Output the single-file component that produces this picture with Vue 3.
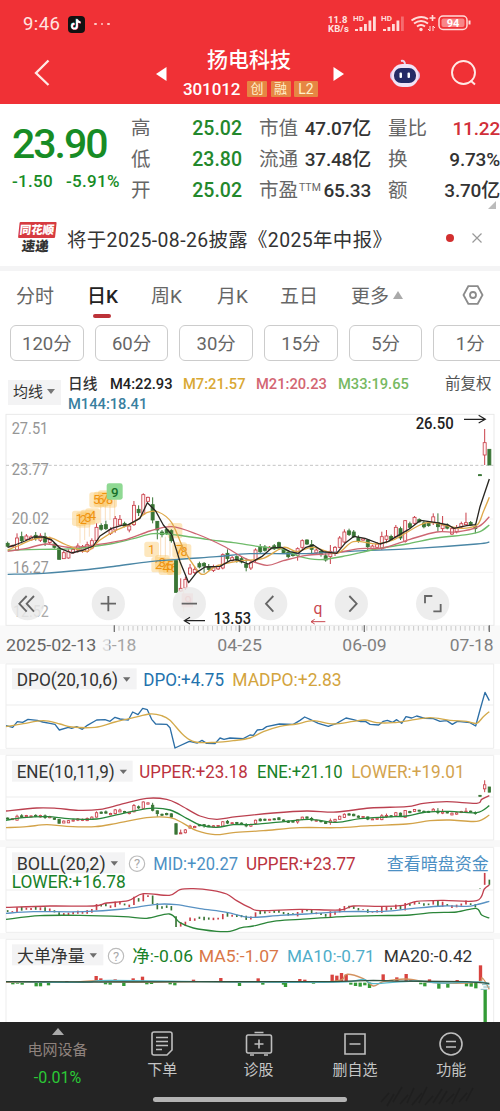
<script setup>
import { h } from 'vue'

const stats = [
  ['高', '25.02', '市值', '', '47.07亿', '量比', '11.22'],
  ['低', '23.80', '流通', '', '37.48亿', '换', '9.73%'],
  ['开', '25.02', '市盈', 'TTM', '65.33', '额', '3.70亿'],
]
const periods = ['120分', '60分', '30分', '15分', '5分', '1分']

// Chart canvases use three units per pixel.
const step = 14.03
const cx = (i) => 23 + i * step

// [colour, high, low, body top, body bottom], one entry per trading day
const days = `g395,412 r404,412 r370,422,384,420 g365,400,380,392 r372,392 r376,393 g366,392,376,386 r370,396 g368,408,380,396 r380,402 g396,416 g414,448,414,448
r422,446,428,446 r418,446,424,444 r413,432 r400,428,408,420 r405,428 r395,428,404,424 r385,418,392,414 r340,396,352,392 g340,362 g332,360,344,356 r352,375 r318,368,326,360 r315,345,328,345 g335,352
r345,367,348,360 r273,348,286,344 g286,318,298,308 r250,315,254,312 r260,275,262,274 g262,340,284,330 g333,388,334,360 g360,382,366,374 g352,375 g358,398,362,392 g450,548,452,547 r505,545,535,543 r500,540,508,534 r462,495,474,492
r470,492,478,488 g455,475 g456,488,460,468 g462,482,470,478 r464,486 r464,480 r430,478,434,474 g418,455,430,446 r438,455 g436,458,440,450 g440,460 g446,484,462,472 r452,480,458,474
r415,458,420,450 g402,432,410,425 g405,425 r408,420 g402,420 g395,420,398,415 g412,432 g420,445 g424,440 r412,452,416,436 r388,420,392,412 g388,405,390,402 g390,430,404,418 r415,432 g422,440,424,434 g430,455 r405,462,424,440 r408,438,412,430
r378,415,384,412 r358,400,366,396 g356,378 g360,384,366,380 g376,398 r384,392 g388,420,390,410 r404,418 r396,416 r365,420,380,415 r360,400,378,388 g374,392 r345,385,352,380 g350,390,356,384 r330,398,332,394 g335,356
r318,345,322,340 g325,338 g332,355 g335,350 r310,345 g310,365,338,350 r318,365,345,356 g340,358 r350,375,356,372 r345,370 r335,355 r308,345,338,344 g333,348 g340,370,350,356 g193,198,194,197 r57,165,98,135 g118,165,118,165`
  .split(/\s+/)
  .map((s, i) => {
    const [hi, lo, a, b] = s.slice(1).split(',').map(Number)
    return { x: cx(i), up: s[0] === 'r', hi, lo, a: a ?? hi + (lo - hi) * 0.3, b: b ?? lo - (lo - hi) * 0.2 }
  })
const shrunk = (off) =>
  days.map((d) => ({ ...d, hi: d.hi * 0.33 + off, lo: d.lo * 0.33 + off, a: d.a * 0.33 + off, b: d.b * 0.33 + off }))
const eneDays = shrunk(342)
const bollDays = shrunk(80)

const pts = (s) => s.trim().split(/\s+/).map((p) => p.split(',').map(Number))
const sharp = (s) => 'M' + pts(s).map((p) => p.join(' ')).join('L')
const smooth = (s) => {
  const p = pts(s)
  let d = `M${p[0]}`
  for (let i = 0; i < p.length - 1; i++) {
    const a = p[i - 1] || p[i], b = p[i], c = p[i + 1], e = p[i + 2] || c
    d += `C${b[0] + (c[0] - a[0]) / 6},${b[1] + (c[1] - a[1]) / 6} ${c[0] - (e[0] - b[0]) / 6},${c[1] - (e[1] - b[1]) / 6} ${c}`
  }
  return d
}

const mainLines = [
  ['#4a86a5', smooth('23,493 130,490 250,480 350,468 450,455 550,447 650,440 750,431 900,431 1050,424 1250,415 1430,402 1468,396')],
  ['#6fbb6a', smooth('23,421 120,418 220,416 330,402 400,386 460,371 530,375 620,388 700,398 780,410 850,418 900,440 960,449 1040,437 1130,417 1220,402 1310,384 1400,374 1440,365 1468,345')],
  ['#cd6672', smooth('23,424 80,415 140,402 210,412 290,404 380,388 450,363 515,350 590,372 670,408 735,445 800,466 850,452 920,436 1000,430 1080,416 1150,414 1230,388 1310,366 1370,366 1435,350 1468,320')],
  ['#dfa94b', smooth('23,420 60,405 100,388 150,383 200,405 260,424 300,390 350,360 400,338 440,308 475,306 515,338 550,415 590,478 612,493 650,468 720,453 790,445 850,412 890,425 940,412 1010,430 1060,395 1130,402 1180,390 1260,345 1300,338 1350,350 1390,355 1432,344 1450,305 1468,262')],
  ['#292722', sharp('23,412 45,405 75,393 100,381 130,381 155,390 180,415 215,429 250,420 280,408 300,378 335,355 365,346 385,344 420,325 442,278 467,303 490,345 515,374 540,455 566,518 590,487 615,471 660,469 690,452 710,449 745,462 785,440 815,414 845,412 870,425 895,430 918,412 940,405 970,425 1010,430 1035,400 1062,379 1095,385 1140,402 1165,394 1195,376 1225,359 1262,331 1310,338 1345,345 1362,355 1400,347 1427,344 1440,290 1468,207')],
]

const dpoLines = [
  ['#2d6fa6', sharp('18,197 38,202 52,185 68,187 84,178 112,181 128,186 150,190 165,193 178,210 205,202 215,205 230,200 247,208 262,196 290,180 315,179 330,184 345,172 360,177 385,180 398,156 414,164 428,145 442,149 455,178 467,192 500,193 510,203 525,264 568,244 592,249 606,241 620,250 645,251 660,234 672,238 690,234 730,236 750,225 760,226 772,210 788,208 800,200 838,192 880,193 900,181 914,171 930,178 955,190 985,199 1010,190 1038,174 1060,179 1082,185 1096,184 1110,193 1136,195 1150,184 1162,181 1178,187 1190,179 1205,190 1218,170 1235,174 1250,168 1275,175 1300,176 1320,184 1340,182 1357,193 1372,184 1410,188 1427,198 1440,150 1455,97 1468,122')],
  ['#d3aa4b', smooth('18,200 70,191 130,182 180,192 215,201 285,202 345,186 400,173 450,162 485,167 510,181 550,225 585,246 645,247 700,242 750,234 790,215 840,199 890,192 940,182 1000,192 1060,184 1095,180 1130,188 1180,188 1230,181 1290,173 1350,181 1400,184 1430,190 1450,170 1468,155')],
]
const eneLines = [
  ['#bb4150', smooth('18,453 110,444 170,445 235,451 300,448 360,434 440,415 500,418 540,435 600,468 650,478 710,470 820,459 920,453 1010,456 1110,444 1220,440 1270,430 1340,425 1430,430 1445,418 1468,407')],
  ['#28863b', smooth('18,481 70,473 140,470 220,477 290,477 370,460 450,445 510,450 560,475 600,495 650,502 700,494 760,493 860,484 930,478 1010,487 1080,476 1160,471 1220,468 1280,456 1350,454 1430,458 1468,437')],
  ['#d3a349', smooth('18,503 80,500 140,494 200,499 285,500 350,490 440,473 510,473 550,490 590,512 645,524 700,518 790,512 900,503 1010,503 1110,497 1220,492 1290,482 1350,480 1430,484 1468,465')],
]
const bollLines = [
  ['#c14150', smooth('18,202 150,198 280,198 320,189 385,182 430,161 508,166 540,149 580,146 635,151 680,162 710,182 750,203 780,212 900,208 1020,210 1060,198 1140,199 1210,196 1250,184 1330,181 1430,182 1453,147 1468,135')],
  ['#5992c3', smooth('18,220 100,215 250,215 370,207 470,193 530,194 600,206 680,217 750,232 840,226 920,222 1030,215 1150,214 1240,205 1330,198 1400,199 1430,194 1468,184')],
  ['#2b8539', smooth('18,238 120,227 240,226 370,230 440,235 508,222 540,248 580,264 650,274 690,274 725,263 760,258 820,244 900,238 1040,229 1130,227 1230,225 1300,218 1370,216 1428,205 1445,225 1468,234')],
]

const volBars = `38,429,433 52,427,431 66,428,434 108,428,439 121,429,439 145,428,436 200,423,427 288,408,424 302,415,424 316,428,433 330,428,434 345,418,424 371,428,438 399,415,424 427,410,424 440,428,433 454,428,432 510,428,433 524,428,436 580,419,424 662,414,424 718,428,438 774,415,424 788,428,434 850,428,434 856,429,441 899,417,424 914,419,424 940,428,431 996,404,424 1010,407,424 1024,399,424 1038,404,424 1052,428,434 1066,428,438 1080,428,440 1094,428,436 1108,428,444 1149,403,423 1190,412,424 1218,402,423 1232,418,424 1262,428,433 1274,428,439 1288,418,424 1316,428,446 1343,428,443 1371,420,424 1399,428,439 1413,428,440 1427,428,445 1441,376,423 1455,450,546`
const bars = pts(volBars)
const volLines = [
  ['#d39260', smooth('18,427 200,427 290,422 400,426 600,425 750,427 1000,424 1040,403 1090,416 1120,438 1150,425 1220,417 1300,428 1430,427 1447,414 1468,448')],
  ['#58b7c9', smooth('18,425 250,427 330,421 700,426 1020,426 1090,418 1120,431 1240,423 1330,429 1440,426 1468,434')],
  ['#30513e', sharp('18,425 300,426 700,425 1000,425 1120,421 1180,423 1400,425 1468,430')],
]

const Candles = ({ list, w = 9, thin = false }) =>
  list.map((d) => {
    const c = d.up ? '#c93f49' : '#397535'
    return h('g', [
      h('path', { d: `M${d.x} ${d.hi}V${d.lo}`, stroke: c, 'stroke-width': thin ? 5 : 3 }),
      thin ? null : h('rect', {
        x: d.x - w / 2, y: d.a, width: w, height: Math.max(3, d.b - d.a),
        fill: d.up ? '#fff3f3' : c, stroke: c, 'stroke-width': 2.5,
      }),
    ])
  })
Candles.props = { list: Array, w: Number, thin: Boolean }

const Curves = ({ list }) =>
  list.map(([c, d]) => h('path', { d, stroke: c, 'stroke-width': 4, fill: 'none', 'stroke-linejoin': 'round' }))
Curves.props = ['list']

const Caption = ({ items }) =>
  items.map(([t, x, y, w, fill, size = 53, weight = 400]) =>
    h('text', { x, y, textLength: w, lengthAdjust: 'spacingAndGlyphs', fill, 'font-size': size, 'font-weight': weight }, t))
Caption.props = ['items']

const Picker = ({ x2, y, arrow }) => [
  h('rect', { x: 36, y, width: x2 - 36, height: 63, fill: '#f3f3f4' }),
  h('path', { d: `M${arrow - 11} ${y + 27}h22l-11 13z`, fill: '#6d6d6d' }),
]
Picker.props = ['x2', 'y', 'arrow']

const mainText = [
  ['27.51', 35, 73, 110, '#969696', 51], ['23.77', 35, 196, 111, '#969696', 51], ['20.02', 35, 342, 112, '#969696', 51],
  ['16.27', 39, 489, 107, '#969696', 51], ['12.52', 39, 622, 107, '#aaa', 51],
  ['26.50', 1247, 56, 114, '#222', 48, 500], ['13.53', 641, 643, 112, '#222', 48, 500],
  ['3-18', 306, 723, 103, '#a5a5a5', 50], ['2025-02-13', 18, 723, 271, '#666', 50],
  ['04-25', 652, 723, 134, '#808080', 50], ['06-09', 1027, 723, 133, '#808080', 50], ['07-18', 1349, 723, 132, '#808080', 50],
]
const dpoText = [
  ['DPO(20,10,6)', 50, 78, 304, '#333'], ['DPO:+4.75', 430, 78, 242, '#2272ad'], ['MADPO:+2.83', 697, 78, 328, '#d3a43d'],
]
const eneText = [
  ['ENE(10,11,9)', 50, 354, 294, '#333'], ['UPPER:+23.18', 418, 354, 325, '#bb3340'],
  ['ENE:+21.10', 771, 354, 257, '#188128'], ['LOWER:+19.01', 1054, 354, 340, '#d3a34e'],
]
const bollText = [
  ['BOLL(20,2)', 50, 90, 267, '#333'], ['MID:+20.27', 460, 90, 254, '#4c90c4'], ['UPPER:+23.77', 738, 90, 329, '#bb3340'],
  ['查看暗盘资金', 1160, 90, 306, '#4c90c4', 51], ['LOWER:+16.78', 35, 144, 342, '#188128'],
]
const volText = [
  ['大单净量', 51, 366, 203, '#333', 50], ['净:-0.06', 397, 366, 182, '#188128', 51], ['MA5:-1.07', 596, 366, 241, '#d97747', 51],
  ['MA10:-0.71', 861, 366, 263, '#4fadc9', 51], ['MA20:-0.42', 1151, 366, 266, '#333', 51],
]

const ticks = Array.from({ length: 81 }, (_, i) => 343 + i * step)
const marks = [
  ['1', 238, 325], ['2', 250, 330], ['3', 264, 322], ['4', 278, 318], ['5', 290, 270], ['6', 303, 268], ['7', 316, 264], ['8', 329, 270],
  ['1', 455, 418], ['2', 476, 464], ['3', 487, 458], ['4', 498, 472], ['5', 510, 466], ['6', 522, 472], ['7', 539, 420], ['8', 552, 425], ['', 525, 362],
]
</script>

<template>
  <div class="phone">
    <header>
      <div class="status">
        <span class="clock">9:46</span>
        <svg class="app-badge" width="17" height="17" viewBox="0 0 17 17">
          <rect width="17" height="17" rx="4" fill="#111" />
          <g fill="none" stroke-width="1.8">
            <path d="M9 3.2v7a2.5 2.5 0 1 1-2.5-2.5M9 3.5q.6 2.6 3.5 2.9" stroke="#27d4dc" transform="translate(-.5 -.4)" />
            <path d="M9 3.2v7a2.5 2.5 0 1 1-2.5-2.5M9 3.5q.6 2.6 3.5 2.9" stroke="#ee3158" transform="translate(.5 .4)" />
            <path d="M9 3.2v7a2.5 2.5 0 1 1-2.5-2.5M9 3.5q.6 2.6 3.5 2.9" stroke="#fff" />
          </g>
        </svg>
        <span class="dots"><i></i><i></i><i></i></span>
        <span class="speed">11.8<br />KB/s</span>
        <svg class="radio" width="146" height="20" viewBox="0 0 146 20" fill="#ffdcd9">
          <g v-for="n in 2" :key="n" :transform="`translate(${(n - 1) * 28} 0)`">
            <text x="0" y="7" font-size="7.500" font-weight="700" textLength="11" lengthAdjust="spacingAndGlyphs">HD</text>
            <rect x="2" y="15" width="3" height="2" /><rect x="6.500" y="13" width="2.800" height="4" />
            <rect x="11" y="10" width="2.800" height="7" /><rect x="15.500" y="6.500" width="2.800" height="10.500" />
            <rect x="20" y="2.500" width="2.800" height="14.500" :opacity="n === 2 ? 0.35 : 1" />
          </g>
          <g fill="none" stroke="#ffdcd9" stroke-width="2">
            <path d="M58.500 6.500Q67.500 .5 75 5M61 9.500Q68 4.500 75 9.500M64 12.500Q68 9.500 72 12.500" />
            <path d="M76.500 4h6M79.500 1v6" stroke-width="1.600" />
            <path d="M77 12v5m-2-2 2 2M80 17v-5m2 2-2-2" stroke-width="1" />
          </g>
          <circle cx="68" cy="15.500" r="1.700" />
          <rect x="86" y="2" width="28" height="13.500" rx="4" fill="none" stroke="#ffdcd9" stroke-width="1.500" />
          <rect x="88.500" y="4.500" width="23" height="8.500" rx="2" opacity=".5" />
          <path d="M116.500 6.500v4" stroke="#ffdcd9" stroke-width="2" />
          <text x="100" y="13" font-size="11" font-weight="700" text-anchor="middle" fill="#fff">94</text>
        </svg>
      </div>
      <div class="nav">
        <svg class="back" width="16" height="28" viewBox="0 0 16 28"><path d="M14.500 1.500 2 14l12.500 12" fill="none" stroke="#ffe9e5" stroke-width="2.300" /></svg>
        <svg class="prev" width="12" height="16" viewBox="0 0 12 16"><path d="M11.500 1v14L1 8z" fill="#fff" /></svg>
        <div class="stock">
          <div class="name">扬电科技</div>
          <div class="code"><span>301012</span><b>创</b><b>融</b><b class="l2">L2</b></div>
        </div>
        <svg class="next" width="12" height="16" viewBox="0 0 12 16"><path d="M.5 1v14L11 8z" fill="#fff" /></svg>
        <svg class="robot" width="32" height="30" viewBox="0 0 32 30">
          <path d="M12 2q4-1 4 4" fill="none" stroke="#e8d5ea" stroke-width="2" />
          <rect x="1" y="11" width="30" height="11" rx="5" fill="#d7b7e2" />
          <rect x="2.500" y="5" width="27" height="23" rx="11" fill="#f1e3f6" />
          <rect x="5" y="9" width="22" height="15" rx="7" fill="#252b66" />
          <rect x="10.500" y="13.500" width="2.500" height="5.500" rx="1" fill="#fff" /><rect x="18.500" y="13.500" width="2.500" height="5.500" rx="1" fill="#fff" />
        </svg>
        <svg class="search" width="28" height="28" viewBox="0 0 28 28" fill="none" stroke="#ffe9e5" stroke-width="1.900"><circle cx="13.500" cy="13.500" r="11.500" /><path d="M20.500 21.500l4.500 4" /></svg>
      </div>
    </header>

    <section class="quote">
      <div class="last">
        <div class="price">23.90</div>
        <div class="delta"><span>-1.50</span><span>-5.91%</span></div>
      </div>
      <div class="stats">
        <div v-for="(s, i) in stats" :key="i" class="stat">
          <label>{{ s[0] }}</label><em>{{ s[1] }}</em>
          <label class="mid">{{ s[2] }}<sup v-if="s[3]">{{ s[3] }}</sup></label><strong>{{ s[4] }}</strong>
          <label class="far">{{ s[5] }}</label><strong :class="{ red: i === 0 }">{{ s[6] }}</strong>
        </div>
      </div>
      <i class="corner"></i>
    </section>

    <section class="notice">
      <div class="express"><b>同花顺</b><strong>速递</strong></div>
      <span class="news">将于2025-08-26披露《2025年中报》</span>
      <i class="dot"></i>
      <svg width="10" height="10" viewBox="0 0 10 10"><path d="M.5.5l9 9M9.500.5l-9 9" stroke="#999" stroke-width="1.200" /></svg>
    </section>

    <nav class="tabs">
      <span>分时</span><span class="on">日K</span><span>周K</span><span>月K</span><span>五日</span><span>更多<i></i></span>
      <svg width="22" height="20" viewBox="0 0 22 20" fill="none" stroke="#8b8b8b" stroke-width="1.800"><path d="M6.300 1.200h9.400L20.500 10l-4.800 8.800H6.300L1.500 10z" /><circle cx="11" cy="10" r="3" /></svg>
    </nav>
    <div class="periods"><button v-for="p in periods" :key="p">{{ p }}</button></div>

    <section class="averages">
      <div class="picker">均线<i></i></div>
      <div class="values">
        <span class="k">日线</span><span class="m4">M4:22.93</span><span class="m7">M7:21.57</span><span class="m21">M21:20.23</span><span class="m33">M33:19.65</span>
        <span class="m144">M144:18.41</span>
      </div>
      <span class="adjust">前复权</span>
    </section>

    <svg class="chart" width="500" height="250" viewBox="0 0 1500 750">
      <rect x="0" y="646" width="1500" height="104" fill="#f9f9f9" />
      <rect x="18" y="13" width="1464" height="633" fill="#fff" stroke="#e9e9e9" stroke-width="3" />
      <path d="M20 327H1480M20 487H1480" stroke="#f3f3f3" stroke-width="3" />
      <path d="M18 166H1480" stroke="#c4c4c4" stroke-width="3" stroke-dasharray="9 7" />
      <path v-for="(t, i) in ticks" :key="i" :d="`M${t} 648v14`" stroke="#c9c9c9" stroke-width="3" />
      <path d="M343 646v20M718 646v20M1093 646v20M1468 646v20" stroke="#777" stroke-width="4" />
      <path d="M240 345V400M254 340V390M268 336V380M302 285V340M316 285V330M330 285V330M344 265V325M482 380V440M496 380V440M510 390V440M551 540V605" stroke="#f6cf9e" stroke-width="2" />
      <rect v-for="(m, i) in marks" :key="'m' + i" :x="m[1] - 22" :y="m[2] - 23" width="44" height="46" rx="8" fill="#fbc45c" opacity=".4" />
      <text v-for="(m, i) in marks" :key="'t' + i" :x="m[1]" :y="m[2] + 13" font-size="38" fill="#f0930f" text-anchor="middle">{{ m[0] }}</text>
      <rect x="320" y="220" width="48" height="49" rx="7" fill="#8fd993" />
      <text x="344" y="261" font-size="40" font-weight="500" fill="#18702a" text-anchor="middle">9</text>
      <Caption :items="mainText.slice(0, 5)" />
      <Candles :list="days" />
      <Curves :list="mainLines" />
      <rect x="545" y="550" width="34" height="42" fill="#ffc5c5" />
      <text x="565" y="584" font-size="40" fill="#ee7777" text-anchor="middle">9</text>
      <g fill="#e9e9e9" fill-opacity=".84">
        <circle v-for="x in [83, 325, 568, 812, 1054, 1298]" :key="x" :cx="x" cy="581" r="50" />
      </g>
      <g fill="none" stroke="#666" stroke-width="5.500">
        <path d="M80 558l-22 23 22 24M102 558l-22 23 22 24M302 581h46M325 558v46M545 581h46M820 558l-22 23 22 24M1048 558l22 23-22 24" />
        <path d="M1275 580v-22h22M1300 604h22v-22" />
      </g>
      <path d="M553 632H615M570 622l-17 10 17 10M1392 28h62M1436 16l20 12-20 11" fill="none" stroke="#222" stroke-width="3.500" />
      <text x="954" y="613" font-size="47" text-anchor="middle" fill="#c94850">q</text>
      <path d="M976 635h-43M944 628l-11 7 11 7" fill="none" stroke="#c94850" stroke-width="3" />
      <Caption :items="mainText.slice(5)" />
      <rect x="300" y="680" width="27" height="50" fill="#f9f9f9" opacity=".65" />
    </svg>

    <svg class="chart" width="500" height="92" viewBox="0 0 1500 276">
      <path d="M0 0H1500V12H0zM0 267H1500v9H0z" fill="#f8f8f8" />
      <path d="M18 12H1481V265H18zM18 135H1481" fill="none" stroke="#ededed" stroke-width="3" />
      <Picker :x2="410" :y="25" :arrow="380" />
      <Caption :items="dpoText" /><Curves :list="dpoLines" />
    </svg>

    <svg class="chart" width="500" height="91" viewBox="0 276 1500 273">
      <path d="M0 276H1500V285H0zM0 541H1500v8H0z" fill="#f8f8f8" />
      <path d="M18 286H1481V540H18zM18 411H1481" fill="none" stroke="#ededed" stroke-width="3" />
      <Picker :x2="398" :y="302" :arrow="370" />
      <Caption :items="eneText" /><Candles :list="eneDays" :w="7" /><Curves :list="eneLines" />
    </svg>

    <svg class="chart" width="500" height="92" viewBox="0 9 1500 276">
      <path d="M0 9H1500V21H0zM0 279H1500v6H0z" fill="#f8f8f8" />
      <path d="M18 22H1481V277H18zM18 150H1481" fill="none" stroke="#ededed" stroke-width="3" />
      <Picker :x2="375" :y="37" :arrow="343" />
      <circle cx="411" cy="71" r="23" fill="none" stroke="#bcbcbc" stroke-width="3.500" />
      <text x="411" y="85" font-size="39" text-anchor="middle" fill="#aaa">?</text>
      <Caption :items="bollText" /><Candles :list="bollDays" thin /><Curves :list="bollLines" />
    </svg>

    <svg class="chart" width="500" height="87" viewBox="0 285 1500 261">
      <path d="M0 285H1500V297H0z" fill="#f8f8f8" />
      <path d="M18 548V298H1481V548" fill="none" stroke="#ededed" stroke-width="3" />
      <Picker :x2="310" :y="313" :arrow="280" />
      <circle cx="348" cy="348" r="23" fill="none" stroke="#bcbcbc" stroke-width="3.500" />
      <text x="348" y="362" font-size="39" text-anchor="middle" fill="#aaa">?</text>
      <Caption :items="volText" />
      <rect v-for="(b, i) in bars" :key="i" :x="b[0] - 4.500" :y="b[1]" width="10" :height="b[2] - b[1]" :fill="b[1] < 425 ? '#d8433f' : '#339b36'" />
      <Curves :list="volLines" />
      <path d="M1446 434h22M1450 441h20M1442 448h20" stroke="#7fb6bb" stroke-width="3" />
    </svg>

    <footer>
      <div class="item sector"><i class="up"></i><span>电网设备</span><em>-0.01%</em></div>
      <div class="item">
        <svg width="24" height="28" viewBox="0 0 24 28"><path d="M4 2h16q2 0 2 2v16l-5 5H4q-2 0-2-2V4q0-2 2-2zM6 7.500h12M6 11.500h12M6 15.500h12M6 19.500h6" /></svg><span>下单</span>
      </div>
      <div class="item">
        <svg width="28" height="28" viewBox="0 0 28 28"><path d="M3 5h22q1.500 0 1.500 2v14q0 2-1.500 2H3q-1.500 0-1.500-2V7Q1.500 5 3 5zM9.500 2.500h9M14 9.500v9M9.500 14h9M5 25h4M19 25h4" /></svg><span>诊股</span>
      </div>
      <div class="item">
        <svg width="24" height="28" viewBox="0 0 24 28"><path d="M2 4h20v20H2zM6.500 14h11" /></svg><span>删自选</span>
      </div>
      <div class="item">
        <svg width="26" height="28" viewBox="0 0 26 28"><circle cx="13" cy="14" r="11" /><path d="M8 11.500h10M8 17h10" /></svg><span>功能</span>
      </div>
      <i class="home"></i>
      <svg class="grain" width="122" height="26" viewBox="0 0 122 26"><path d="M3 20l8-9m-2 13l7-12m-1 8l9-15m-2 17l8-9m-1 8l7-15m-2 17l10-12m-3 10l8-16m-2 18l8-9m0 7l9-14m-3 15l8-13m-1 11l8-8m-2 10l8-16m-1 14l8-9m-1 8l7-13" /></svg>
    </footer>
  </div>
</template>

<style>
body { margin: 0; background: #fff; overflow: hidden; }
</style>

<style scoped>
.phone { width: 500px; height: 1111px; display: flex; flex-direction: column; overflow: hidden; background: #fff; color: #333; font-family: Roboto, "Noto Sans CJK SC", sans-serif; }
.phone > * { flex: none; box-sizing: border-box; }
i, em { font-style: normal; }
.chart { display: block; }

header { height: 104px; background: #f03136; color: #fff; display: flex; flex-direction: column; }
.status { height: 48px; display: flex; align-items: center; padding-left: 23px; box-sizing: border-box; color: #ffe3e0; }
.clock { font-size: 18.500px; letter-spacing: .4px; width: 45px; }
.dots { display: flex; gap: 4px; margin-left: 9px; width: 234px; }
.dots i { width: 2.500px; height: 2.500px; border-radius: 50%; background: #ffc9c5; }
.speed { flex: none; font-size: 9.500px; line-height: 9px; font-weight: 700; width: 25px; letter-spacing: .1px; white-space: nowrap; }
.radio { flex: none; }
.nav { height: 56px; display: flex; align-items: center; }
.back { margin-left: 34px; margin-bottom: 7px; }
.prev { margin-left: 105px; margin-bottom: 5px; }
.stock { width: 144px; margin-left: 12px; margin-top: -6px; }
.name { font-size: 21px; line-height: 29px; font-weight: 500; text-align: center; padding-right: 4px; }
.code { display: flex; align-items: center; height: 24px; padding-left: 4px; margin-top: 2px; }
.code span { font-size: 17px; font-weight: 500; letter-spacing: -.1px; width: 64px; }
.code b { width: 20px; height: 16px; margin-right: 3.500px; background: #e68643; border-radius: 1px; font-size: 13px; line-height: 16px; font-weight: 400; text-align: center; color: #fff0cb; }
.code .l2 { width: 24px; font-size: 14px; margin-right: 0; }
.next { margin-left: 10px; margin-bottom: 5px; }
.robot { margin-left: 44px; margin-bottom: 5px; }
.search { margin-left: 29px; margin-bottom: 6px; }

.quote { height: 109px; display: flex; padding-top: 9px; position: relative; }
.last { flex: none; width: 119px; padding-left: 12px; color: #178c25; }
.price { font-size: 41px; line-height: 48px; font-weight: 500; letter-spacing: -2px; margin-top: 7px; }
.delta { display: flex; gap: 13px; font-size: 17px; line-height: 24px; margin-top: 1px; font-weight: 500; letter-spacing: .3px; white-space: nowrap; }
.stat { display: grid; grid-template-columns: 35px 76px 57px 72px 58px 71px; height: 31px; line-height: 31px; font-size: 19.500px; white-space: nowrap; }
.stat label { color: #666; font-size: 19.500px; }
.stat em { text-align: right; color: #23882c; font-weight: 500; }
.stat strong { font-weight: 500; justify-self: end; font-size: 19px; letter-spacing: -.2px; }
.stat .mid, .stat .far { padding-left: 17px; }
.stat sup { font-size: 10.500px; margin-left: 1px; vertical-align: 6px; line-height: 0; }
.stat .red { color: #d12f38; }
.corner { position: absolute; right: 4px; bottom: 4px; border: 4px solid; border-color: transparent #bbb #bbb transparent; }

.notice { height: 58px; display: flex; align-items: center; padding-bottom: 3px; border-bottom: 5px solid #f4f4f5; }
.express { width: 40px; margin-left: 16px; display: flex; flex-direction: column; align-items: center; transform: skewX(-6deg); }
.express b { width: 37px; height: 16px; background: #d63b40; color: #fff; font-size: 11.500px; line-height: 16px; text-align: center; font-weight: 900; white-space: nowrap; border-radius: 1px; }
.express strong { font-size: 13.500px; line-height: 16px; font-weight: 900; }
.news { width: 370px; margin-left: 11px; font-size: 19.400px; white-space: nowrap; letter-spacing: .4px; }
.dot { width: 8px; height: 8px; margin-left: 9px; border-radius: 50%; background: #d22f2f; }
.notice svg { margin-left: 18px; }

.tabs { height: 54px; display: flex; align-items: center; padding: 0 16px 7px; font-size: 19px; color: #666; }
.tabs span { flex: none; white-space: nowrap; }
.tabs span:nth-child(1) { width: 71px; }
.tabs span:nth-child(2) { width: 64px; }
.tabs span:nth-child(3) { width: 66px; }
.tabs span:nth-child(4) { width: 63px; }
.tabs span:nth-child(5) { width: 71px; }
.tabs span:nth-child(6) { width: 111px; }
.tabs .on { color: #222; font-weight: 500; position: relative; }
.tabs .on::after { content: ""; position: absolute; left: 6px; bottom: -10px; width: 18px; height: 4px; border-radius: 2px; background: #bc3238; }
.tabs span i { display: inline-block; margin: 0 0 4px 4px; border: 5px solid transparent; border-top: 0; border-bottom: 8px solid #aaa; }

.periods { display: flex; gap: 11px; padding-left: 10px; height: 36px; overflow: hidden; }
.periods button { flex: none; width: 73.700px; height: 36px; box-sizing: border-box; padding: 0 0 2px; background: #fff; border: 1px solid #ccc; border-radius: 6px; color: #666; font: 18.500px Roboto, "Noto Sans CJK SC", sans-serif; }

.averages { height: 49px; padding-top: 13px; display: flex; font-size: 15.500px; }
.picker { flex: none; width: 53px; height: 25px; margin: 6px 7px 0 8px; box-sizing: border-box; padding-left: 5px; background: #f3f3f4; font-size: 15px; line-height: 25px; white-space: nowrap; }
.picker i { display: inline-block; margin: 0 0 3px 4px; border: 4px solid transparent; border-bottom: 0; border-top: 5px solid #777; }
.values { flex: none; width: 377px; display: grid; grid-template-columns: 42px 73px 73px 82px 80px; grid-auto-rows: 20px; line-height: 20px; font-size: 14.700px; font-weight: 500; white-space: nowrap; }
.m4 { color: #222; } .m7 { color: #d9a834; } .m21 { color: #d36572; } .m33 { color: #77b962; }
.m144 { color: #397f9f; grid-column: 1 / 4; }
.adjust { line-height: 20px; color: #555; font-size: 15.500px; white-space: nowrap; }

footer { height: 89px; background: #242424; display: flex; padding-left: 12px; position: relative; color: #c5c5c5; }
.item { flex: none; width: 96.400px; display: flex; flex-direction: column; align-items: center; padding-top: 8px; box-sizing: border-box; font-size: 15px; line-height: 24px; }
.item svg { fill: none; stroke: #bebebe; stroke-width: 1.600; }
.sector { width: 91px; margin-right: 11px; padding-top: 6px; line-height: 22px; color: #8e827d; }
.sector .up { border: 6px solid transparent; border-top: 0; border-bottom: 7px solid #aaa; }
.sector span { margin-top: 4px; white-space: nowrap; }
.sector em { color: #2bc936; font-size: 16px; margin-top: 6px; }
.home { position: absolute; left: 153px; bottom: 9px; width: 194px; height: 5px; border-radius: 3px; background: #b4b4b4; }
.grain { position: absolute; right: 0; bottom: 3px; fill: none; stroke: #1a1a1a; stroke-width: 1.500; opacity: .5; }
</style>
